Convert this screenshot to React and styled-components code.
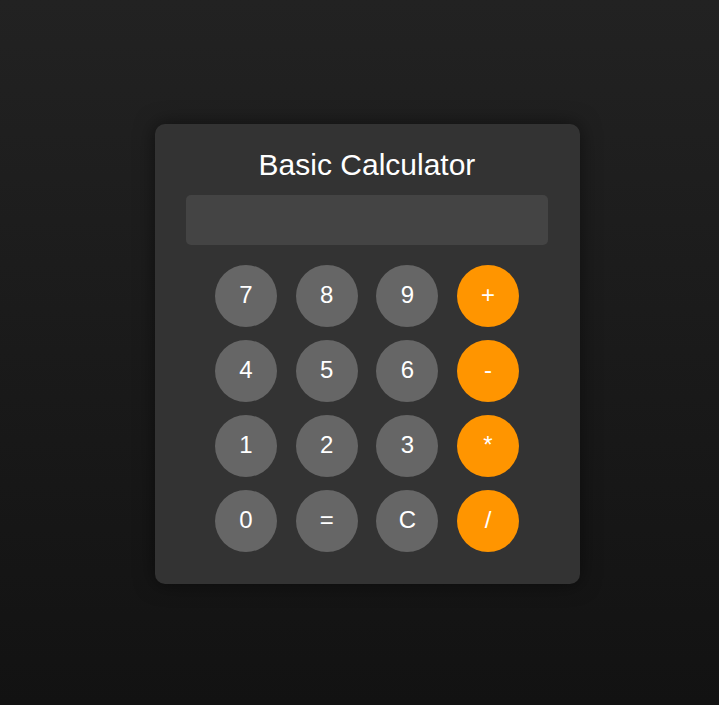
import React from "react";
import styled, { createGlobalStyle } from "styled-components";

const Global = createGlobalStyle`
  html, body { margin: 0; padding: 0; }
  body {
    font-family: "Liberation Sans", Arial, sans-serif;
    background: linear-gradient(180deg, #222222 0%, #121212 100%);
    min-height: 705px;
  }
`;

const Page = styled.div`
  box-sizing: border-box;
  min-height: 100vh;
  display: flex;
  align-items: center;
  justify-content: center;
  padding: 3px 0 0 16px;
`;

const Card = styled.div`
  box-sizing: border-box;
  width: 425px;
  padding: 24px 32px 32px 31px;
  background: #333333;
  border-radius: 10px;
  box-shadow: 0 0 20px rgba(0, 0, 0, 0.5);
  display: flex;
  flex-direction: column;
`;

const Title = styled.h2`
  margin: 0 0 13px;
  font-size: 30px;
  font-weight: normal;
  line-height: 34px;
  color: #ffffff;
  text-align: center;
`;

const Display = styled.div`
  height: 50px;
  background: #444444;
  border-radius: 5px;
  margin-bottom: 20px;
`;

const Keys = styled.div`
  display: grid;
  grid-template-columns: repeat(4, 62px);
  column-gap: 18.67px;
  row-gap: 13px;
  justify-content: center;
`;

const Key = styled.button`
  width: 62px;
  height: 62px;
  border: none;
  border-radius: 50%;
  padding: 0 0 2px;
  background: ${(p) => (p.$op ? "#ff9500" : "#666666")};
  color: #ffffff;
  font-family: "Liberation Sans", Arial, sans-serif;
  font-size: 24px;
  cursor: pointer;
  display: flex;
  align-items: center;
  justify-content: center;
`;

const keys = [
  ["7"], ["8"], ["9"], ["+", true],
  ["4"], ["5"], ["6"], ["-", true],
  ["1"], ["2"], ["3"], ["*", true],
  ["0"], ["="], ["C"], ["/", true],
];

export default function App() {
  return (
    <>
      <Global />
      <Page>
        <Card>
          <Title>Basic Calculator</Title>
          <Display />
          <Keys>
            {keys.map(([k, op]) => (
              <Key key={k} $op={op}>{k}</Key>
            ))}
          </Keys>
        </Card>
      </Page>
    </>
  );
}
